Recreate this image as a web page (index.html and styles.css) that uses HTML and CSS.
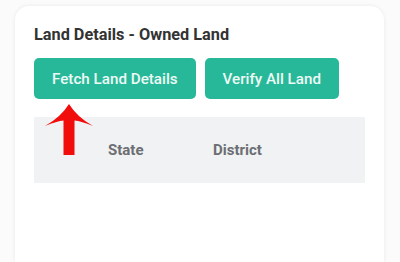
FILE: index.html
```html
<!DOCTYPE html>
<html lang="en">
<head>
  <meta charset="UTF-8">
  <meta name="viewport" content="width=device-width, initial-scale=1.0">
  <title>Land Details</title>
  <link rel="stylesheet" href="styles.css">
</head>
<body>
  <div class="card">
    <h3 class="card-title">Land Details - Owned Land</h3>
    <div class="actions">
      <button class="btn">Fetch Land Details</button>
      <button class="btn">Verify All Land</button>
    </div>
    <div class="table-wrap">
      <table class="land-table">
        <thead>
          <tr>
            <th class="col-no"></th>
            <th class="col-state">State</th>
            <th>District</th>
          </tr>
        </thead>
        <tbody></tbody>
      </table>
      <!-- pointer to the fetch button -->
      <svg class="arrow" width="50" height="54" viewBox="0 0 50 54">
        <path d="M24 0 Q16 13 0 22 Q12 17 18.5 16.5 L18.5 51 L29.5 51 L29.5 16.5 Q36 17 48 22 Q32 13 24 0 Z" fill="#f20d0d"/>
      </svg>
    </div>
  </div>
</body>
</html>
```

FILE: styles.css
```css
/* Land details card */
body {
  font-family: Roboto, "Noto Sans", sans-serif;
  margin: 0;
  padding: 6px 16px 0 15px;
  background-color: #fbfbfb;
}
.card {
  background-color: #fff;
  border-radius: 14px 14px 0 0;
  box-shadow: 0 0 4px rgba(0, 0, 0, 0.08);
  padding: 20px 19px 0;
  height: 256px;
  box-sizing: border-box;
}
.card-title {
  margin: 0;
  font-size: 16.3px;
  line-height: 18px;
  font-weight: 700;
  color: #333;
}
.actions {
  display: flex;
  gap: 9px;
  margin-top: 14px;
}
.btn {
  font-family: inherit;
  background-color: #27b899;
  color: #eefaf6;
  border: none;
  border-radius: 5px;
  height: 41px;
  padding: 0 18px;
  font-size: 15.2px;
  font-weight: 500;
}
.table-wrap {
  position: relative;
  margin-top: 18px;
  width: 331px;
}
.land-table {
  width: 100%;
  border-collapse: collapse;
  background-color: #f1f2f4;
}
.land-table th {
  height: 66px;
  padding: 0;
  text-align: left;
  font-size: 15px;
  font-weight: 700;
  color: #6b6e72;
}
.col-no {
  width: 74px;
}
.col-state {
  width: 105px;
}
.arrow {
  position: absolute;
  left: 11px;
  top: -13px;
}
```
